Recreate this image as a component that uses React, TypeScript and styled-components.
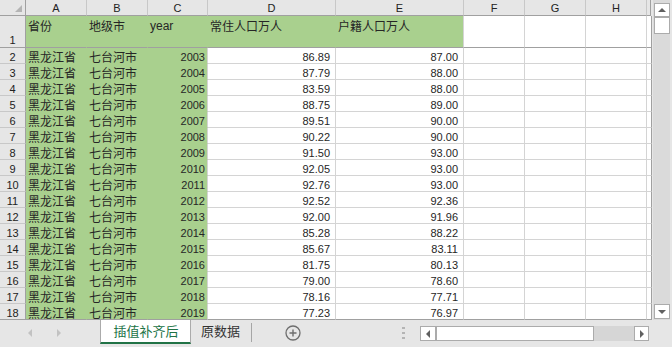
import React from "react";
import styled, { createGlobalStyle } from "styled-components";

const GlobalStyle = createGlobalStyle`
  html, body { margin: 0; padding: 0; background: #e6e6e6; }
  * { box-sizing: border-box; }
`;

const GRID = "#d4d4d4";
const HEAD_LINE = "#c8c8c8";
const FRAME = "#a0a0a0";
const GREEN = "#a9d08e";
const HEAD_BG = "#e6e6e6";
const EXCEL_GREEN = "#217346";
const CJK = `"Noto Sans CJK SC", "Noto Sans", sans-serif`;
const LATIN = `"Liberation Sans", Arial, sans-serif`;

const Window = styled.div`
  width: 672px;
  height: 347px;
  display: flex;
  flex-direction: column;
  overflow: hidden;
  background: ${HEAD_BG};
`;

const Workspace = styled.div`
  display: flex;
  height: 320px;
`;

const Sheet = styled.div`
  display: grid;
  grid-template-columns: 26px 61px 61px 60px 128px 128px 61px 61px 61px 4px;
  grid-template-rows: 16px 32px repeat(17, 16px);
  width: 651px;
  background: #fff;
`;

const Corner = styled.div`
  position: relative;
  background: ${HEAD_BG};
  border-right: 1px solid ${FRAME};
  border-bottom: 1px solid ${FRAME};
  &::after {
    content: "";
    position: absolute;
    right: 3px;
    bottom: 3px;
    width: 0;
    height: 0;
    border-left: 7px solid transparent;
    border-bottom: 7px solid #b4b4b4;
  }
`;

const ColHead = styled.div<{ $last?: boolean }>`
  background: ${HEAD_BG};
  border-right: 1px solid ${(p) => (p.$last ? FRAME : HEAD_LINE)};
  border-bottom: 1px solid ${FRAME};
  font-family: ${LATIN};
  font-size: 11px;
  line-height: 15px;
  color: #222;
  text-align: center;
  padding-top: 1px;
`;

const RowHead = styled.div<{ $line: string; $tall?: boolean }>`
  background: ${HEAD_BG};
  border-right: 1px solid ${FRAME};
  border-bottom: 1px solid ${(p) => p.$line};
  font-family: ${LATIN};
  font-size: 11px;
  line-height: 12px;
  color: #222;
  display: flex;
  align-items: flex-end;
  justify-content: center;
  padding-bottom: ${(p) => (p.$tall ? "1px" : "0")};
`;

const Cell = styled.div<{
  $fill?: boolean;
  $num?: boolean;
  $pr?: number;
  $right: string;
  $bottom: string;
  $head?: boolean;
  $latin?: boolean;
}>`
  background: ${(p) => (p.$fill ? GREEN : "#fff")};
  border-right: 1px solid ${(p) => p.$right};
  border-bottom: 1px solid ${(p) => p.$bottom};
  font-family: ${(p) => (p.$num || p.$latin ? LATIN : CJK)};
  font-size: ${(p) => (p.$num ? "11px" : "12px")};
  line-height: ${(p) => (p.$head ? "16px" : "12px")};
  color: #262626;
  white-space: nowrap;
  overflow: hidden;
  display: flex;
  align-items: ${(p) => (p.$head ? "flex-start" : "flex-end")};
  justify-content: ${(p) => (p.$num ? "flex-end" : "flex-start")};
  padding-left: 2px;
  padding-right: ${(p) => p.$pr ?? 2}px;
  padding-top: ${(p) => (p.$head ? "2px" : "0")};
`;

const VScroll = styled.div`
  width: 21px;
  height: 320px;
  padding-left: 2px;
  padding-right: 2px;
`;

const VTrack = styled.div`
  height: 100%;
  background: #dadada;
  display: flex;
  flex-direction: column;
  padding: 3px 0 1px 1px;
`;

const ScrollBtn = styled.div<{ $w: number; $h: number }>`
  width: ${(p) => p.$w}px;
  height: ${(p) => p.$h}px;
  flex: none;
  background: #fff;
  border: 1px solid #ababab;
  display: flex;
  align-items: center;
  justify-content: center;
`;

const Thumb = styled.div<{ $w: number; $h: number }>`
  width: ${(p) => p.$w}px;
  height: ${(p) => p.$h}px;
  flex: none;
  background: #fff;
  border: 1px solid #ababab;
`;

const Grow = styled.div`
  flex: 1;
`;

const Arrow = styled.span<{ $dir: "up" | "down" | "left" | "right"; $color?: string }>`
  width: 0;
  height: 0;
  ${(p) => {
    const c = p.$color ?? "#606060";
    switch (p.$dir) {
      case "up":
        return `border-left:4px solid transparent;border-right:4px solid transparent;border-bottom:4px solid ${c};`;
      case "down":
        return `border-left:4px solid transparent;border-right:4px solid transparent;border-top:4px solid ${c};`;
      case "left":
        return `border-top:4px solid transparent;border-bottom:4px solid transparent;border-right:4px solid ${c};`;
      default:
        return `border-top:4px solid transparent;border-bottom:4px solid transparent;border-left:4px solid ${c};`;
    }
  }}
`;

const TabBar = styled.div`
  display: flex;
  height: 27px;
  background: ${HEAD_BG};
`;

const SheetNav = styled.div`
  width: 100px;
  display: flex;
  align-items: center;
  padding-left: 28px;
  gap: 25px;
  padding-bottom: 1px;
`;

const ActiveTab = styled.div`
  width: 91px;
  height: 24px;
  background: #fff;
  border-left: 1px solid #ababab;
  border-right: 1px solid #ababab;
  border-bottom: 2px solid ${EXCEL_GREEN};
  color: ${EXCEL_GREEN};
  font-family: ${CJK};
  font-size: 13px;
  line-height: 22px;
  text-align: center;
  padding-left: 1px;
`;

const Tab = styled.div`
  width: 60px;
  height: 24px;
  color: #333;
  font-family: ${CJK};
  font-size: 13px;
  line-height: 22px;
  padding-left: 10px;
`;

const TabSep = styled.div`
  width: 1px;
  height: 19px;
  margin-top: 3px;
  background: #a6a6a6;
`;

const AddSheet = styled.div`
  margin-left: 33px;
  margin-top: 5px;
  width: 16px;
  height: 16px;
`;

const Dots = styled.div`
  width: 3px;
  margin-right: 15px;
  margin-top: 7px;
  display: flex;
  flex-direction: column;
  gap: 3px;
`;

const Dot = styled.span`
  width: 3px;
  height: 2px;
  background: #b4b4b4;
`;

const HScroll = styled.div`
  width: 229px;
  height: 15px;
  margin-top: 6px;
  margin-right: 23px;
  background: #d6d6d6;
  display: flex;
`;

const COLS = ["A", "B", "C", "D", "E", "F", "G", "H"];

const rows: [number, string, string][] = [
  [2003, "86.89", "87.00"],
  [2004, "87.79", "88.00"],
  [2005, "83.59", "88.00"],
  [2006, "88.75", "89.00"],
  [2007, "89.51", "90.00"],
  [2008, "90.22", "90.00"],
  [2009, "91.50", "93.00"],
  [2010, "92.05", "93.00"],
  [2011, "92.76", "93.00"],
  [2012, "92.52", "92.36"],
  [2013, "92.00", "91.96"],
  [2014, "85.28", "88.22"],
  [2015, "85.67", "83.11"],
  [2016, "81.75", "80.13"],
  [2017, "79.00", "78.60"],
  [2018, "78.16", "77.71"],
  [2019, "77.23", "76.97"],
];

export default function App() {
  return (
    <>
      <GlobalStyle />
      <Window>
        <Workspace>
          <Sheet>
            <Corner />
            {COLS.map((c) => (
              <ColHead key={c}>{c}</ColHead>
            ))}
            <ColHead $last />

            <RowHead $line={FRAME} $tall>1</RowHead>
            <Cell $fill $head $right={GREEN} $bottom={FRAME}>省份</Cell>
            <Cell $fill $head $right={GREEN} $bottom={FRAME}>地级市</Cell>
            <Cell $fill $head $latin $right={GREEN} $bottom={FRAME}>year</Cell>
            <Cell $fill $head $right={GREEN} $bottom={FRAME}>常住人口万人</Cell>
            <Cell $fill $head $right={GRID} $bottom={FRAME}>户籍人口万人</Cell>
            <Cell $right={GRID} $bottom={FRAME} />
            <Cell $right={GRID} $bottom={FRAME} />
            <Cell $right={GRID} $bottom={FRAME} />
            <Cell $right={FRAME} $bottom={FRAME} />

            {rows.map(([year, resident, registered], i) => {
              const last = i === rows.length - 1;
              const gridB = last ? FRAME : GRID;
              const greenB = last ? FRAME : GREEN;
              return (
                <React.Fragment key={year}>
                  <RowHead $line={last ? FRAME : HEAD_LINE}>{i + 2}</RowHead>
                  <Cell $fill $right={GREEN} $bottom={greenB}>黑龙江省</Cell>
                  <Cell $fill $right={GREEN} $bottom={greenB}>七台河市</Cell>
                  <Cell $fill $num $pr={2} $right={GRID} $bottom={greenB}>{year}</Cell>
                  <Cell $num $pr={5} $right={GRID} $bottom={gridB}>{resident}</Cell>
                  <Cell $num $pr={5} $right={GRID} $bottom={gridB}>{registered}</Cell>
                  <Cell $right={GRID} $bottom={gridB} />
                  <Cell $right={GRID} $bottom={gridB} />
                  <Cell $right={GRID} $bottom={gridB} />
                  <Cell $right={FRAME} $bottom={gridB} />
                </React.Fragment>
              );
            })}
          </Sheet>
          <VScroll>
            <VTrack>
              <ScrollBtn $w={16} $h={14}>
                <Arrow $dir="up" />
              </ScrollBtn>
              <Thumb $w={16} $h={17} />
              <Grow />
              <ScrollBtn $w={16} $h={15}>
                <Arrow $dir="down" />
              </ScrollBtn>
            </VTrack>
          </VScroll>
        </Workspace>
        <TabBar>
          <SheetNav>
            <Arrow $dir="left" $color="#c2c2c2" />
            <Arrow $dir="right" $color="#c2c2c2" />
          </SheetNav>
          <ActiveTab>插值补齐后</ActiveTab>
          <Tab>原数据</Tab>
          <TabSep />
          <AddSheet>
            <svg width="16" height="16" viewBox="0 0 16 16">
              <circle cx="8" cy="8" r="7" fill="none" stroke="#6e6e6e" strokeWidth="1.3" />
              <path d="M8 4.5v7M4.5 8h7" stroke="#6e6e6e" strokeWidth="1.4" />
            </svg>
          </AddSheet>
          <Grow />
          <Dots>
            <Dot />
            <Dot />
            <Dot />
          </Dots>
          <HScroll>
            <ScrollBtn $w={16} $h={15}>
              <Arrow $dir="left" />
            </ScrollBtn>
            <Thumb $w={158} $h={15} />
            <Grow />
            <ScrollBtn $w={15} $h={15}>
              <Arrow $dir="right" />
            </ScrollBtn>
          </HScroll>
        </TabBar>
      </Window>
    </>
  );
}
